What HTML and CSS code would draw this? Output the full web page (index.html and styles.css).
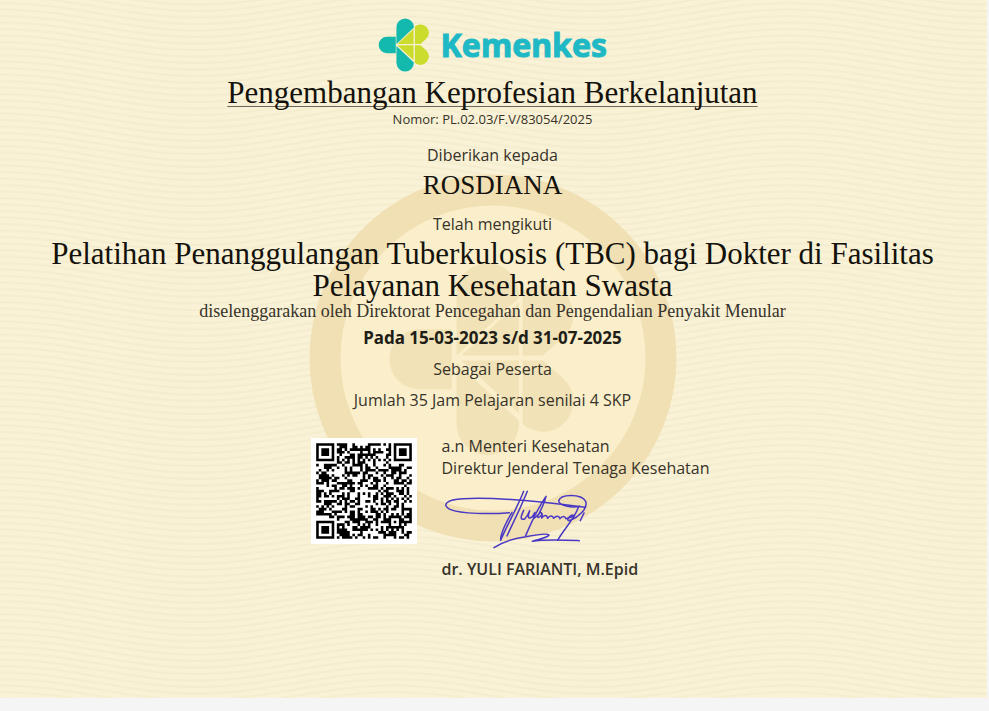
FILE: index.html
```html
<!DOCTYPE html>
<html lang="id">
<head>
<meta charset="utf-8">
<meta name="viewport" content="width=device-width, initial-scale=1">
<title>Sertifikat Kemenkes</title>
<link rel="stylesheet" href="styles.css">
</head>
<body>
<main class="certificate">
  <svg class="waves" aria-hidden="true">
    <defs>
      <path id="wave" d="M-10 0.3 L0 0 C72 0 125 21 197 21 S322 0 394 0 L404 0.3"/>
      <pattern id="wave-lines" width="394" height="6.5" patternUnits="userSpaceOnUse">
        <g fill="none" stroke="#f4ecce" stroke-width="2">
          <use href="#wave" y="3"/><use href="#wave" y="-3.5"/><use href="#wave" y="-10"/><use href="#wave" y="-16.5"/><use href="#wave" y="-23"/><use href="#wave" y="9.5"/>
        </g>
      </pattern>
    </defs>
    <rect width="100%" height="100%" fill="url(#wave-lines)"/>
  </svg>

  <svg class="watermark" viewBox="0 0 368 368" aria-hidden="true">
    <circle cx="184" cy="184" r="168" fill="#faefca" stroke="#f1e0b4" stroke-width="31"/>
    <g fill="#f2e2b7" transform="translate(51.5 58) scale(1.2)">
      <path d="M80 103V52a26 26 0 0 1 52 0V55z"/>
      <path d="M76 81H49a25 25 0 0 0 0 50H76z"/>
      <path d="M80 109V160a26 26 0 0 0 52 0V157z"/>
      <path d="M84 103L132 59V103zM84 107H132V151zM135 50a25 25 0 0 1 34 38L152 103H135zM135 160a25 25 0 0 0 34-38L152 107H135z"/>
    </g>
  </svg>

  <div class="content">
    <div class="brand">
      <svg class="brand-mark" viewBox="22 24 154 164" aria-hidden="true">
        <g fill="#13b9ad">
          <path d="M78 103V52a26 26 0 0 1 53 0V53z"/>
          <path d="M76 81H49a25 25 0 0 0 0 50H76z"/>
          <path d="M78 109V160a26 26 0 0 0 53 0V159z"/>
        </g>
        <g fill="#cbdc2c">
          <path d="M81 103L130 58V103zM81 107H130V152zM134 50a25 25 0 0 1 34 38L151 103H134zM134 160a25 25 0 0 0 34-38L151 107H134z"/>
        </g>
      </svg>
      <span class="brand-name">Kemenkes</span>
    </div>

    <h1 class="display title">Pengembangan Keprofesian Berkelanjutan</h1>
    <p class="number">Nomor: PL.02.03/F.V/83054/2025</p>

    <p class="line">Diberikan kepada</p>
    <h2 class="display recipient">ROSDIANA</h2>
    <p class="line">Telah mengikuti</p>
    <h2 class="display course">Pelatihan Penanggulangan Tuberkulosis (TBC) bagi Dokter di Fasilitas Pelayanan Kesehatan Swasta</h2>
    <p class="organizer">diselenggarakan oleh Direktorat Pencegahan dan Pengendalian Penyakit Menular</p>
    <p class="line date">Pada 15-03-2023 s/d 31-07-2025</p>
    <p class="line">Sebagai Peserta</p>
    <p class="line">Jumlah 35 Jam Pelajaran senilai 4 SKP</p>

    <section class="approval">
      <svg class="qr" viewBox="-2 -2 41 41" role="img" aria-label="Kode QR sertifikat">
        <rect x="-2" y="-2" width="41" height="41" fill="#fff"/>
        <path id="qr-modules" fill="#000"/>
      </svg>
      <div class="signer">
        <p>a.n Menteri Kesehatan</p>
        <p>Direktur Jenderal Tenaga Kesehatan</p>
        <svg class="signature" viewBox="30 20 450 195" role="img" aria-label="Tanda tangan">
          <g fill="none" stroke="#4a38c4" stroke-width="4.5" stroke-linecap="round" stroke-linejoin="round">
            <path d="M235 97C180 102 90 101 57 87C31 75 46 57 96 55C190 50 350 66 461 81"/>
            <path d="M278 33C260 80 230 130 209 180C207 165 225 125 243 96M289 33C270 80 245 130 228 167"/>
            <path d="M278 90C270 107 265 120 281 116C290 108 293 99 296 91C289 111 292 119 304 109L312 96C303 119 309 117 320 104C318 115 325 113 334 102"/>
            <path d="M284 166C298 133 323 80 345 48C341 68 328 91 322 104C329 93 335 94 332 113C340 103 348 103 350 114C357 104 365 106 368 114C376 105 384 106 387 115C393 106 402 106 405 115L428 108"/>
            <path d="M447 78C420 83 385 76 383 62C388 40 451 40 464 63C472 87 438 112 420 119C403 126 411 107 426 104M442 81C431 115 395 151 380 180"/>
            <path d="M459 98L448 121M189 202C220 181 250 174 284 169C310 164 350 158 354 164C347 174 318 177 304 183C340 176 400 179 445 181"/>
          </g>
        </svg>
        <p class="signer-name">dr. YULI FARIANTI, M.Epid</p>
      </div>
    </section>
  </div>
</main>
<script src="qr.js"></script>
</body>
</html>
```
FILE: styles.css
```css
* {
  box-sizing: border-box;
}

body {
  margin: 0;
  background: #f5f5f5;
  color: #37332a;
  font: 16px/22px "Open Sans", "Noto Sans", sans-serif;
}

h1, h2, p {
  margin: 0;
}

.certificate {
  position: relative;
  overflow: hidden;
  margin-right: 2px;
  padding: 18px 40px 118px 38px;
  background: #f9f2d6;
}

.waves {
  position: absolute;
  inset: 0;
  width: 100%;
  height: 100%;
}

.watermark {
  position: absolute;
  top: 174px;
  left: 50%;
  width: 368px;
  margin-left: -185px;
}

.content {
  position: relative;
  text-align: center;
}

.brand {
  display: flex;
  justify-content: center;
  align-items: center;
  gap: 12px;
  height: 54px;
}

.brand-mark {
  height: 54px;
}

.brand-name {
  color: #1fb9c6;
  font: 700 32px/54px "Noto Sans", sans-serif;
  -webkit-text-stroke: 1px #1fb9c6;
}

.display {
  color: #14120c;
  font: 400 31px/32px "Liberation Serif", serif;
}

.title {
  margin-top: 4px;
  line-height: 34px;
  text-decoration: underline 1px #6b675c;
  text-decoration-skip-ink: none;
  text-underline-offset: 3px;
}

.number {
  font-size: 13px;
  line-height: 18px;
}

.line {
  margin-top: 9px;
}

.number + .line {
  margin-top: 16px;
}

.recipient {
  margin-top: 3px;
  font-size: 27px;
}

.recipient + .line {
  margin-top: 12px;
}

.course {
  margin-top: 3px;
}

.organizer {
  font: 18px/18px "Liberation Serif", serif;
}

.date {
  margin-top: 7px;
  color: #211e18;
  font-family: "Noto Sans", sans-serif;
  font-size: 17px;
  font-weight: 700;
}

.approval {
  display: flex;
  justify-content: center;
  gap: 24px;
  margin-top: 24px;
  padding-left: 36px;
  text-align: left;
}

.qr {
  width: 106px;
  height: 106px;
  margin-top: 3px;
}

.signature {
  display: block;
  width: 150px;
  height: 65px;
  margin-top: 8px;
}

.signer-name {
  margin-top: 6px;
  font-weight: 600;
}
```
FILE: qr.js
```js
// Draws a 37 x 37 module code: finders, timing tracks, alignment mark, data area.
const size = 37;
let seed = 83054;
const nextBit = () => {
  seed = (seed * 1103515245 + 12345) % 2147483648;
  return (seed >> 16) % 100 < 51;
};
const ring = (x, y, cx, cy) => Math.max(Math.abs(x - cx), Math.abs(y - cy));
const moduleAt = (x, y) => {
  const data = nextBit();
  for (const [cx, cy] of [[3, 3], [33, 3], [3, 33]]) {
    const r = ring(x, y, cx, cy);
    if (r <= 4) return r !== 2 && r !== 4;
  }
  const a = ring(x, y, 30, 30);
  if (a <= 2) return a !== 1;
  if (y === 6) return x % 2 === 0;
  if (x === 6) return y % 2 === 0;
  return data;
};
let d = "";
for (let y = 0; y < size; y++) {
  for (let x = 0; x < size; x++) {
    if (moduleAt(x, y)) d += `M${x} ${y}h1v1h-1z`;
  }
}
document.getElementById("qr-modules").setAttribute("d", d);
```
